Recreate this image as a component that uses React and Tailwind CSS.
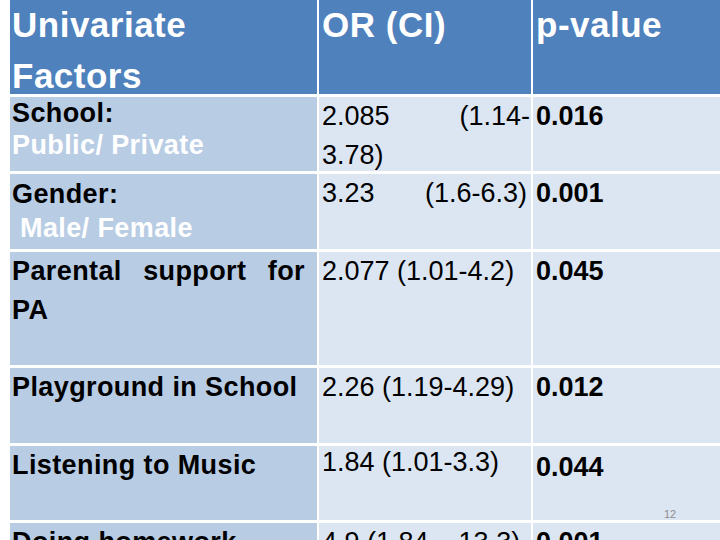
export default function App() {
  const c1 = "bg-[#b8cce4] pl-[2px] text-[27px] font-bold tracking-[0.4px] text-black";
  const c2 = "bg-[#dce6f2] pl-[3px] pr-px text-[27px] text-black";
  const c3 = "bg-[#dce6f2] pl-[3px] text-[27px] font-bold text-black";
  const hd = "bg-[#4f81bd] text-white font-bold text-[35px] tracking-[0.5px] leading-[51px]";
  return (
    <div className="relative w-[720px] h-[540px] overflow-hidden bg-white font-['Liberation_Sans',Arial,sans-serif]">
      <div className="ml-[10px] grid grid-cols-[307px_212px_187px] grid-rows-[94px_74px_75px_113px_75px_74px_60px] gap-x-[2px] gap-y-[3px]">
        {/* header */}
        <div className={`${hd} pl-[2px]`}>
          <div className="-mt-[1px]">
            <div>Univariate</div>
            <div>Factors</div>
          </div>
        </div>
        <div className={`${hd} pl-[3px]`}>
          <div className="-mt-[1px]">OR (CI)</div>
        </div>
        <div className={`${hd} pl-[3px]`}>
          <div className="-mt-[1px]">p-value</div>
        </div>

        {/* row 1 */}
        <div className={`${c1} leading-[32px]`}>
          <div>School:</div>
          <div className="text-white">Public/ Private</div>
        </div>
        <div className={`${c2} leading-[39px]`}>
          <div className="flex justify-between">
            <span>2.085</span>
            <span>(1.14-</span>
          </div>
          <div>3.78)</div>
        </div>
        <div className={`${c3} leading-[39px]`}>0.016</div>

        {/* row 2 */}
        <div className={`${c1} pt-[3px] leading-[34px]`}>
          <div>Gender:</div>
          <div className="pl-[8px] text-white">Male/ Female</div>
        </div>
        <div className={`${c2} leading-[39px]`}>
          <div className="flex w-[205px] justify-between">
            <span>3.23</span>
            <span>(1.6-6.3)</span>
          </div>
        </div>
        <div className={`${c3} leading-[39px]`}>0.001</div>

        {/* row 3 */}
        <div className={`${c1} leading-[39px]`}>
          <div className="flex w-[293px] justify-between">
            <span>Parental</span>
            <span>support</span>
            <span>for</span>
          </div>
          <div>PA</div>
        </div>
        <div className={`${c2} leading-[39px]`}>2.077 (1.01-4.2)</div>
        <div className={`${c3} leading-[39px]`}>0.045</div>

        {/* row 4 */}
        <div className={`${c1} leading-[39px]`}>Playground in School</div>
        <div className={`${c2} leading-[39px] text-[26px]`}>2.26 (1.19-4.29)</div>
        <div className={`${c3} leading-[39px]`}>0.012</div>

        {/* row 5 */}
        <div className={`${c1} leading-[39px]`}>Listening to Music</div>
        <div className={`${c2} leading-[32px]`}>1.84 (1.01-3.3)</div>
        <div className={`${c3} leading-[42px]`}>0.044</div>

        {/* row 6 */}
        <div className={`${c1} leading-[39px]`}>Doing homework</div>
        <div className={`${c2} leading-[39px]`}>4.9 (1.84 – 13.3)</div>
        <div className={`${c3} leading-[39px]`}>0.001</div>
      </div>
      <div className="absolute left-[664px] top-[508px] text-[11px] leading-[13px] text-[#8c8c8c]">12</div>
    </div>
  );
}
